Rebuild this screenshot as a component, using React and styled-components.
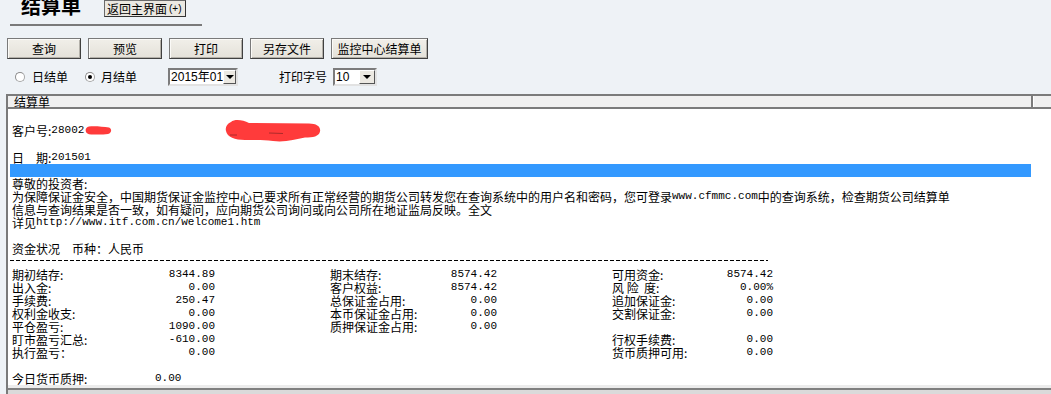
import React from 'react';
import styled, { createGlobalStyle } from 'styled-components';

const GlobalStyle = createGlobalStyle`
  html, body {
    margin: 0;
    padding: 0;
    background: #eef2f6;
  }
  body {
    font-family: "Noto Sans CJK SC", "Liberation Sans", sans-serif;
    font-size: 12px;
    color: #000;
    overflow: hidden;
  }
`;

const Page = styled.div`
  width: 1051px;
  height: 394px;
  overflow: hidden;
`;

const TitleRow = styled.div`
  display: flex;
  align-items: flex-start;
  height: 17px;
  padding-left: 21px;
`;

const Title = styled.h1`
  margin: 0;
  width: 83px;
  font-size: 20px;
  font-weight: 700;
  line-height: 12px;
`;

const BackButton = styled.div`
  box-sizing: border-box;
  height: 17px;
  padding: 0 3px 0 2px;
  display: flex;
  align-items: center;
  background: #ebe8e1;
  border: 1px solid #6a6a6a;
  border-right-color: #333;
  border-bottom-color: #333;
  font-size: 12px;
  line-height: 15px;
  white-space: nowrap;
`;

const Small = styled.span`
  font-family: "Liberation Sans", sans-serif;
  font-size: 10px;
  margin-left: 2px;
`;

const TitleRule = styled.div`
  margin: 7px 0 0 10px;
  width: 192px;
  height: 2px;
  background: #7a7a7a;
`;

const ButtonRow = styled.div`
  display: flex;
  gap: 7px;
  margin-top: 12px;
  padding-left: 7px;
`;

const ToolButton = styled.div`
  box-sizing: border-box;
  width: ${p => p.$w}px;
  height: 21px;
  display: flex;
  align-items: center;
  justify-content: center;
  background: linear-gradient(#f1efe9, #e4e1d9);
  border: 1px solid #7a7a7a;
  border-right-color: #404040;
  border-bottom-color: #404040;
  box-shadow: inset 1px 1px 0 #fbfaf7, inset -1px -1px 0 #b4b1aa;
  font-size: 12px;
`;

const OptionRow = styled.div`
  display: flex;
  align-items: center;
  height: 18px;
  margin-top: 9px;
  padding-left: 15px;
`;

const Radio = styled.span`
  box-sizing: border-box;
  width: 10px;
  height: 10px;
  border-radius: 50%;
  border: 1px solid #a7a7a7;
  border-top-color: #8c8c8c;
  border-left-color: #8c8c8c;
  background: #fff;
  display: flex;
  align-items: center;
  justify-content: center;
  margin-left: ${p => p.$gap || 0}px;

  &::after {
    content: '';
    width: 4px;
    height: 4px;
    border-radius: 50%;
    background: ${p => (p.$on ? '#000' : 'transparent')};
  }
`;

const OptText = styled.span`
  margin-left: ${p => p.$gap || 0}px;
  white-space: nowrap;
  line-height: 14px;
`;

const Select = styled.div`
  box-sizing: border-box;
  width: ${p => p.$w}px;
  height: 18px;
  margin-left: ${p => p.$gap || 0}px;
  display: flex;
  background: #fff;
  border: 2px solid #7c7c7c;
  border-right-color: #e2e2e2;
  border-bottom-color: #e2e2e2;
`;

const SelectText = styled.span`
  flex: 1;
  padding-left: 1px;
  font-family: "Liberation Sans", "Noto Sans CJK SC", sans-serif;
  font-size: 12px;
  line-height: 14px;
  white-space: nowrap;
`;

const SelectArrow = styled.span`
  box-sizing: border-box;
  width: 16px;
  height: 14px;
  display: flex;
  align-items: center;
  justify-content: center;
  background: #ece9e2;
  border: 1px solid #fff;
  border-right-color: #555;
  border-bottom-color: #555;

  &::after {
    content: '';
    border-left: 4px solid transparent;
    border-right: 4px solid transparent;
    border-top: 4px solid #000;
  }
`;

const Panel = styled.div`
  margin: 8px 0 0 6px;
  border-left: 2px solid #7a7a7a;
  background: #fff;
`;

const PanelHeader = styled.div`
  display: flex;
  height: 11px;
  background: #f0f0f0;
  border-top: 2px solid #7b7b7b;
  border-bottom: 2px solid #7b7b7b;
`;

const HeaderCell = styled.div`
  width: ${p => (p.$w ? `${p.$w}px` : 'auto')};
  flex: ${p => (p.$w ? 'none' : 1)};
  padding-left: ${p => p.$pad || 0}px;
  box-sizing: border-box;
  font-size: 12px;
  line-height: 11px;
  border-right: ${p => (p.$w ? '2px solid #7b7b7b' : 'none')};
  border-left: ${p => (p.$w ? 'none' : '1px solid #fff')};
`;

const Body = styled.div`
  box-sizing: border-box;
  height: 276px;
  padding: 15px 0 0 4px;
`;

const Line = styled.div`
  display: flex;
  align-items: center;
  height: 13px;
  line-height: 13px;
  white-space: nowrap;
  margin-top: ${p => p.$top || 0}px;
`;

const Field = styled.div`
  display: flex;
  align-items: center;
  width: ${p => p.$w}px;
  flex: none;
`;

const Mono = styled.span`
  font-family: "Liberation Mono", monospace;
  font-size: ${p => p.$size || 10}px;
`;

const BlueBar = styled.div`
  width: 1021px;
  height: 13px;
  margin-left: -2px;
  background: #3399ff;
`;

const DashLine = styled.div`
  width: 758px;
  height: 1px;
  margin: 5px 0 7px -2px;
  background: repeating-linear-gradient(to right, #000 0 4px, transparent 4px 6px);
`;

const Stats = styled.div`
  display: grid;
  grid-template-columns: 203px 167px 161px;
  column-gap: 115px;
  align-items: start;
`;

const StatCol = styled.div`
  display: flex;
  flex-direction: column;
`;

const StatRow = styled.div`
  display: flex;
  justify-content: space-between;
  height: 13px;
  line-height: 13px;
  white-space: pre;
`;

const Footer = styled.div`
  height: 3px;
  background: #ececec;
  border-bottom: 2px solid #808080;
`;

const Track = styled.div`
  height: 12px;
  background: #dadada;
`;

const ShortMark = () => (
  <svg width="27" height="9" viewBox="0 0 27 9" style={{ marginLeft: 1 }}>
    <path d="M4 0.5 C 10 -0.2, 18 0.8, 24 1.5 C 27 2.5, 27 7, 23 8 C 16 9, 9 8.5, 4 8.2 C -0.5 7.5, -0.5 1.2, 4 0.5 Z" fill="#ff3b3b" />
  </svg>
);

const LongMark = () => (
  <svg width="96" height="24" viewBox="0 0 96 24">
    <path
      d="M6 3 C 10 -0.5, 18 1, 24 4 L 84 4.5 C 92 4.5, 96 8, 95 12.5 C 94 17.5, 88 18.5, 80 18.5 C 70 20.5, 60 23.5, 48 22 C 38 20.5, 30 21, 20 21 C 10 21, 2 18, 1 12 C 0 8, 2 5, 6 3 Z"
      fill="#ff3b3b"
    />
    <path d="M5 16 L 12 16 M 44 14 L 58 14.5" stroke="#7a2020" strokeWidth="1" opacity="0.6" />
  </svg>
);

const left = [
  ['期初结存:', '8344.89'],
  ['出入金:', '0.00'],
  ['手续费:', '250.47'],
  ['权利金收支:', '0.00'],
  ['平仓盈亏:', '1090.00'],
  ['盯市盈亏汇总:', '-610.00'],
  ['执行盈亏：', '0.00'],
];

const middle = [
  ['期末结存:', '8574.42'],
  ['客户权益:', '8574.42'],
  ['总保证金占用:', '0.00'],
  ['本币保证金占用:', '0.00'],
  ['质押保证金占用:', '0.00'],
];

const right = [
  ['可用资金:', '8574.42'],
  ['风 险  度:', '0.00%'],
  ['追加保证金:', '0.00'],
  ['交割保证金:', '0.00'],
  null,
  ['行权手续费:', '0.00'],
  ['货币质押可用:', '0.00'],
];

const Column = ({ rows }) => (
  <StatCol>
    {rows.map((r, i) =>
      r ? (
        <StatRow key={i}>
          <span>{r[0]}</span>
          <Mono $size={11}>{r[1]}</Mono>
        </StatRow>
      ) : (
        <StatRow key={i} />
      )
    )}
  </StatCol>
);

const App = () => {
  return (
    <Page>
      <GlobalStyle />
      <TitleRow>
        <Title>结算单</Title>
        <BackButton>
          返回主界面<Small>(+)</Small>
        </BackButton>
      </TitleRow>
      <TitleRule />

      <ButtonRow>
        <ToolButton $w={74}>查询</ToolButton>
        <ToolButton $w={74}>预览</ToolButton>
        <ToolButton $w={74}>打印</ToolButton>
        <ToolButton $w={74}>另存文件</ToolButton>
        <ToolButton $w={97}>监控中心结算单</ToolButton>
      </ButtonRow>

      <OptionRow>
        <Radio />
        <OptText $gap={7}>日结单</OptText>
        <Radio $on $gap={17} />
        <OptText $gap={6}>月结单</OptText>
        <Select $w={70} $gap={31}>
          <SelectText>2015年01</SelectText>
          <SelectArrow />
        </Select>
        <OptText $gap={41}>打印字号</OptText>
        <Select $w={44} $gap={6}>
          <SelectText>10</SelectText>
          <SelectArrow />
        </Select>
      </OptionRow>

      <Panel>
        <PanelHeader>
          <HeaderCell $w={1025} $pad={6}>结算单</HeaderCell>
          <HeaderCell />
        </PanelHeader>
        <Body>
          <Line>
            <Field $w={213}>
              客户号:<Mono $size={11}>28002</Mono>
              <ShortMark />
            </Field>
            <LongMark />
          </Line>
          <Line $top={14}>
            日　期:<Mono $size={11}>201501</Mono>
          </Line>
          <BlueBar />
          <Line>尊敬的投资者:</Line>
          <Line>
            为保障保证金安全，中国期货保证金监控中心已要求所有正常经营的期货公司转发您在查询系统中的用户名和密码，您可登录
            <Mono $size={11}>www.cfmmc.com</Mono>中的查询系统，检查期货公司结算单
          </Line>
          <Line>信息与查询结果是否一致，如有疑问，应向期货公司询问或向公司所在地证监局反映。全文</Line>
          <Line>
            详见<Mono $size={11}>http://www.itf.com.cn/welcome1.htm</Mono>
          </Line>
          <Line $top={13}>资金状况　币种：人民币</Line>
          <DashLine />
          <Stats>
            <Column rows={left} />
            <Column rows={middle} />
            <Column rows={right} />
          </Stats>
          <Line $top={13}>
            <Field $w={143}>今日货币质押:</Field>
            <Mono $size={11}>0.00</Mono>
          </Line>
        </Body>
        <Footer />
        <Track />
      </Panel>
    </Page>
  );
};

export default App;
